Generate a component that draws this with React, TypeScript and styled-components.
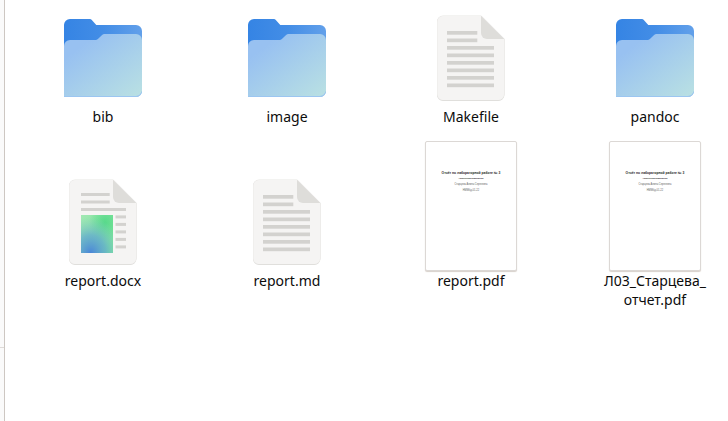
import React, { useId } from 'react';
import styled, { createGlobalStyle } from 'styled-components';

const GlobalStyle = createGlobalStyle`
  *, *::before, *::after { box-sizing: border-box; }
  body {
    margin: 0;
    background: #ffffff;
    color: #0c0c0c;
    font-family: "Noto Sans", "Open Sans", sans-serif;
  }
`;

const Window = styled.div`
  display: flex;
  min-height: 100vh;
`;

const SidebarEdge = styled.div`
  display: flex;
  flex-direction: column;
  flex: 0 0 5px;
  background: #fafafa;
  border-right: 1px solid #cdc7c2;
`;

const SidebarSection = styled.div`
  height: 348px;
  border-bottom: 1px solid #dedad7;
`;

const FileGrid = styled.main`
  flex: 1;
  display: grid;
  grid-template-columns: repeat(auto-fill, 120px);
  column-gap: 64px;
  align-content: start;
  padding: 11px 0 0 38px;
`;

const FileItem = styled.button`
  display: grid;
  grid-row: span 2;
  grid-template-rows: subgrid;
  justify-items: center;
  padding: 0 0 15px;
  border: 0;
  background: none;
  color: inherit;
  font: inherit;
`;

const Preview = styled.span`
  display: flex;
  align-self: end;
`;

const Label = styled.span`
  font-size: 14px;
  line-height: 19px;
  text-align: center;
  white-space: pre-line;
`;

const Icon = styled.svg`
  display: block;
  width: 96px;
  height: 96px;
`;

const Page = styled.svg`
  display: block;
  width: 92px;
  height: 130px;
  background: #ffffff;
  border: 1px solid #dcd8d5;
  border-radius: 2px;
  box-shadow: 0 1px 1px #d8d1cb;
  font-family: "Liberation Sans", sans-serif;
`;

function FolderIcon() {
  const id = useId();
  return (
    <Icon viewBox="0 0 96 96" aria-hidden="true">
      <defs>
        <linearGradient id={`${id}back`} x1="0" y1="0" x2="1" y2="0">
          <stop offset="0" stopColor="#3584e4" />
          <stop offset="0.5" stopColor="#438de6" />
          <stop offset="1" stopColor="#62a0ea" />
        </linearGradient>
        <linearGradient id={`${id}front`} x1="0.12" y1="0.12" x2="0.95" y2="1">
          <stop offset="0.1" stopColor="#98c1f1" />
          <stop offset="1" stopColor="#b9e0e3" />
        </linearGradient>
      </defs>
      <path d="M9 86V14a6 6 0 0 1 6-6h19.5c1 0 1.600.3 2.300 1l4.500 5H81a6 6 0 0 1 6 6v60a6 6 0 0 1-6 6z" fill={`url(#${id}back)`} />
      <path d="M9 86V35a6 6 0 0 1 6-6h25.500c1 0 1.700-.3 2.400-1l4.200-4c.7-.7 1.400-1 2.400-1H81a6 6 0 0 1 6 6v51a6 6 0 0 1-6 6z" fill={`url(#${id}front)`} clipPath={`url(#${id}clip)`} />
      <clipPath id={`${id}clip`}>
        <path d="M9 8H87V80a6 6 0 0 1-6 6H9z" />
      </clipPath>
      <path d="M9 85.500H81a6 6 0 0 0 5.500-4" fill="none" stroke="#9cc6f1" />
    </Icon>
  );
}

function Sheet() {
  return (
    <>
      <path d="M20 5.100H58.500L81.400 28V84a6 6 0 0 1-6 6H20a6 6 0 0 1-6-6V11.100a6 6 0 0 1 6-6z" fill="#deddda" />
      <path d="M20 4.600H58L81.500 28V83.300a6 6 0 0 1-6 6H20a6 6 0 0 1-6-6V10.600a6 6 0 0 1 6-6z" fill="#e8e7e4" />
      <path d="M20 5H58L81 28V83a5.600 5.600 0 0 1-5.600 6H20a5.600 5.600 0 0 1-5.600-6V11A5.600 5.600 0 0 1 20 5z" fill="#f5f4f3" />
      <path d="M58 4.800L81.300 28H64a6 6 0 0 1-6-6z" fill="#deddda" />
    </>
  );
}

const textLines = [0, 1, 2, 3, 4, 5, 6, 7];
const captionLines = [0, 1, 2, 3, 4];

function TextIcon() {
  return (
    <Icon viewBox="0 0 96 96" aria-hidden="true">
      <Sheet />
      {textLines.map((n) => (
        <rect key={n} x="24" y={20 + n * 7.5} width={n < 2 ? 30.3 : 47} height="3.700" fill="#d3d2cf" />
      ))}
    </Icon>
  );
}

function DocumentIcon() {
  const id = useId();
  return (
    <Icon viewBox="0 0 96 96" aria-hidden="true">
      <defs>
        <linearGradient id={`${id}base`} x1="0" y1="0" x2="1" y2="0.4">
          <stop offset="0" stopColor="#a2e8b4" />
          <stop offset="1" stopColor="#7de59a" />
        </linearGradient>
        <radialGradient id={`${id}green`} cx="0.75" cy="0.2" r="0.5">
          <stop offset="0" stopColor="#57d98a" />
          <stop offset="1" stopColor="#57d98a" stopOpacity="0" />
        </radialGradient>
        <radialGradient id={`${id}blue`} cx="0.3" cy="1" r="0.95">
          <stop offset="0" stopColor="#4a86d8" />
          <stop offset="0.5" stopColor="#62aad0" stopOpacity="0.75" />
          <stop offset="1" stopColor="#7bc9c4" stopOpacity="0" />
        </radialGradient>
      </defs>
      <Sheet />
      <g fill="#d3d2cf">
        <rect x="26" y="18" width="28.700" height="3" />
        <rect x="26" y="25.500" width="28.700" height="3" />
        <rect x="26" y="33" width="45" height="3" />
        {captionLines.map((n) => (
          <rect key={n} x="60.500" y={40.4 + n * 7.5} width="10.500" height="3" />
        ))}
      </g>
      {['base', 'green', 'blue'].map((layer) => (
        <rect key={layer} x="26" y="40" width="32" height="38" fill={`url(#${id}${layer})`} />
      ))}
    </Icon>
  );
}

function PageThumbnail() {
  return (
    <Page viewBox="0 0 595 842" textAnchor="middle" fill="#222222">
      <text x="297" y="211" fontSize="22" fontWeight="700">Отчёт по лабораторной работе № 3</text>
      <text x="297" y="241" fontSize="13" fontWeight="700">Архитектура компьютера</text>
      <g fill="#666666">
        <text x="297" y="285" fontSize="17">Старцева Алина Сергеевна</text>
        <text x="297" y="325" fontSize="17">НММбд-01-22</text>
      </g>
    </Page>
  );
}

const previews = {
  folder: FolderIcon,
  text: TextIcon,
  document: DocumentIcon,
  pdf: PageThumbnail,
};

const files: { name: string; kind: keyof typeof previews }[] = [
  { name: 'bib', kind: 'folder' },
  { name: 'image', kind: 'folder' },
  { name: 'Makefile', kind: 'text' },
  { name: 'pandoc', kind: 'folder' },
  { name: 'report.docx', kind: 'document' },
  { name: 'report.md', kind: 'text' },
  { name: 'report.pdf', kind: 'pdf' },
  { name: 'Л03_Старцева_\nотчет.pdf', kind: 'pdf' },
];

export default function App() {
  return (
    <>
      <GlobalStyle />
      <Window>
        <SidebarEdge>
          <SidebarSection />
        </SidebarEdge>
        <FileGrid>
          {files.map(({ name, kind }) => {
            const Drawing = previews[kind];
            return (
              <FileItem key={name} type="button">
                <Preview>
                  <Drawing />
                </Preview>
                <Label>{name}</Label>
              </FileItem>
            );
          })}
        </FileGrid>
      </Window>
    </>
  );
}
